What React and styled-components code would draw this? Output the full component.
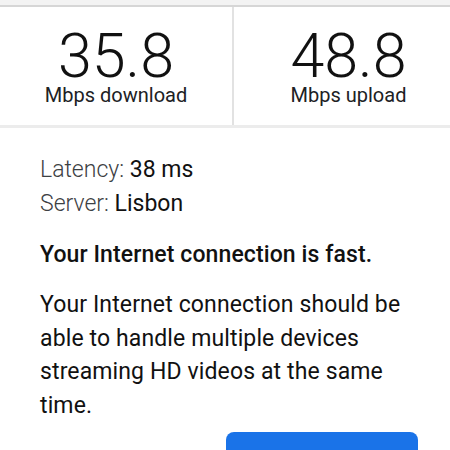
import React from 'react';
import styled, { createGlobalStyle } from 'styled-components';

const GlobalStyle = createGlobalStyle`
  html, body {
    margin: 0;
    padding: 0;
    height: 450px;
    background: #fff;
    font-family: Roboto, "Noto Sans", sans-serif;
    color: #202124;
    overflow: hidden;
  }
`;

const Page = styled.div`
  width: 463px;
`;

const TopStrip = styled.div`
  height: 5px;
  background: #f3f3f3;
  border-bottom: 2px solid #d6d6d6;
`;

const StatsRow = styled.div`
  display: grid;
  grid-template-columns: 232px 1fr;
  height: 118px;
  border-bottom: 3px solid #ececec;
`;

const Stat = styled.div`
  display: flex;
  flex-direction: column;
  align-items: center;
  padding-top: 19px;
  border-left: ${(p) => (p.$divider ? '2px solid #e2e2e2' : 'none')};
`;

const Value = styled.div`
  font-size: 61px;
  font-weight: 300;
  line-height: 60px;
  color: #111;
`;

const Unit = styled.div`
  margin-top: -3px;
  font-size: 20px;
  font-weight: 400;
  line-height: 24px;
  color: #202124;
`;

const Body = styled.div`
  padding: 25px 40px 0;
`;

const Info = styled.div`
  font-size: 23px;
  line-height: 34px;
  font-weight: 400;
  color: #111;
`;

const Label = styled.span`
  font-weight: 300;
  color: #3c4043;
`;

const Verdict = styled.div`
  margin-top: 18px;
  font-size: 23px;
  font-weight: 500;
  letter-spacing: 0.1px;
  line-height: 32px;
  color: #111;
`;

const Description = styled.p`
  margin: 17px 0 0;
  font-size: 23px;
  letter-spacing: 0.12px;
  line-height: 33.5px;
  color: #111;
`;

const Actions = styled.div`
  display: flex;
  justify-content: flex-end;
  margin-top: 10px;
`;

const Button = styled.button`
  width: 192px;
  height: 60px;
  border: none;
  border-radius: 8px;
  background: #1a73e8;
  color: #fff;
  font-family: Roboto, sans-serif;
  font-size: 16px;
  font-weight: 500;
  margin-right: 5px;
`;

export default function App() {
  return (
    <Page>
      <GlobalStyle />
      <TopStrip />
      <StatsRow>
        <Stat>
          <Value>35.8</Value>
          <Unit>Mbps download</Unit>
        </Stat>
        <Stat $divider>
          <Value>48.8</Value>
          <Unit>Mbps upload</Unit>
        </Stat>
      </StatsRow>
      <Body>
        <Info>
          <Label>Latency:</Label> 38 ms
        </Info>
        <Info>
          <Label>Server:</Label> Lisbon
        </Info>
        <Verdict>Your Internet connection is fast.</Verdict>
        <Description>
          Your Internet connection should be able to handle multiple devices streaming HD videos at the same time.
        </Description>
        <Actions>
          <Button>Run speed test</Button>
        </Actions>
      </Body>
    </Page>
  );
}
